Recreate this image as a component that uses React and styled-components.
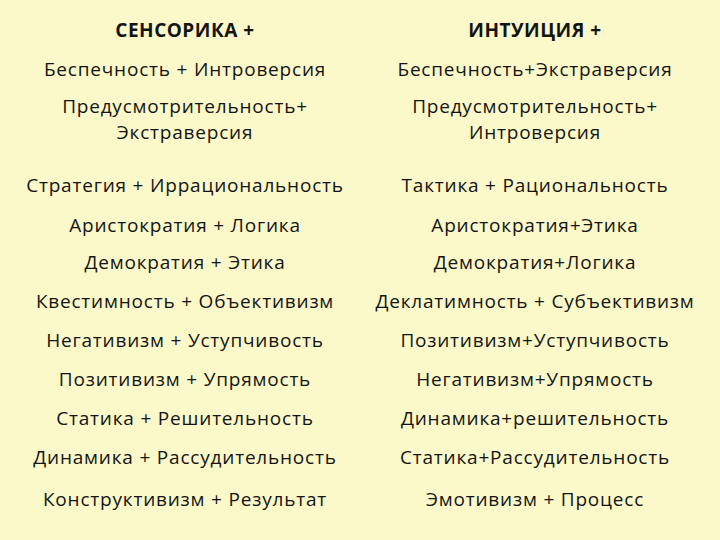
import React from "react";
import styled, { createGlobalStyle } from "styled-components";

const Global = createGlobalStyle`
  html, body { margin: 0; padding: 0; background: #fbf9c9; }
  body { font-family: "Open Sans", "Liberation Sans", sans-serif; color: #141414; }
`;

const Page = styled.div`
  width: 720px;
  height: 540px;
  box-sizing: border-box;
  padding: 19px 10px 0;
  display: flex;
  flex-direction: column;
  background: #fbf9c9;
  overflow: hidden;
`;

const Row = styled.div`
  display: grid;
  grid-template-columns: 350px 350px;
  margin-top: ${(p) => p.$gap || 0}px;
`;

const Cell = styled.div`
  text-align: center;
  font-size: 19px;
  line-height: ${(p) => (p.$multi ? 26 : 22)}px;
  letter-spacing: ${(p) => (p.$head ? 0.5 : 0.8)}px;
  white-space: nowrap;
  font-weight: ${(p) => (p.$head ? 700 : 400)};
`;

const rows = [
  { gap: 17, l: "Беспечность + Интроверсия", r: "Беспечность+Экстраверсия" },
  { gap: 13, l: ["Предусмотрительность+", "Экстраверсия"], r: ["Предусмотрительность+", "Интроверсия"] },
  { gap: 29, l: "Стратегия + Иррациональность", r: "Тактика + Рациональность" },
  { gap: 18, l: "Аристократия + Логика", r: "Аристократия+Этика" },
  { gap: 15, l: "Демократия + Этика", r: "Демократия+Логика" },
  { gap: 17, l: "Квестимность + Объективизм", r: "Деклатимность + Субъективизм" },
  { gap: 17, l: "Негативизм + Уступчивость", r: "Позитивизм+Уступчивость" },
  { gap: 17, l: "Позитивизм + Упрямость", r: "Негативизм+Упрямость" },
  { gap: 17, l: "Статика + Решительность", r: "Динамика+решительность" },
  { gap: 17, l: "Динамика + Рассудительность", r: "Статика+Рассудительность" },
  { gap: 20, l: "Конструктивизм + Результат", r: "Эмотивизм + Процесс" },
];

const renderText = (t) =>
  Array.isArray(t)
    ? t.map((s, i) => (
        <React.Fragment key={i}>
          {i > 0 && <br />}
          {s}
        </React.Fragment>
      ))
    : t;

export default function App() {
  return (
    <>
      <Global />
      <Page>
        <Row>
          <Cell $head>СЕНСОРИКА +</Cell>
          <Cell $head>ИНТУИЦИЯ +</Cell>
        </Row>
        {rows.map((r, i) => {
          const multi = Array.isArray(r.l);
          return (
            <Row key={i} $gap={r.gap}>
              <Cell $multi={multi}>{renderText(r.l)}</Cell>
              <Cell $multi={multi}>{renderText(r.r)}</Cell>
            </Row>
          );
        })}
      </Page>
    </>
  );
}
